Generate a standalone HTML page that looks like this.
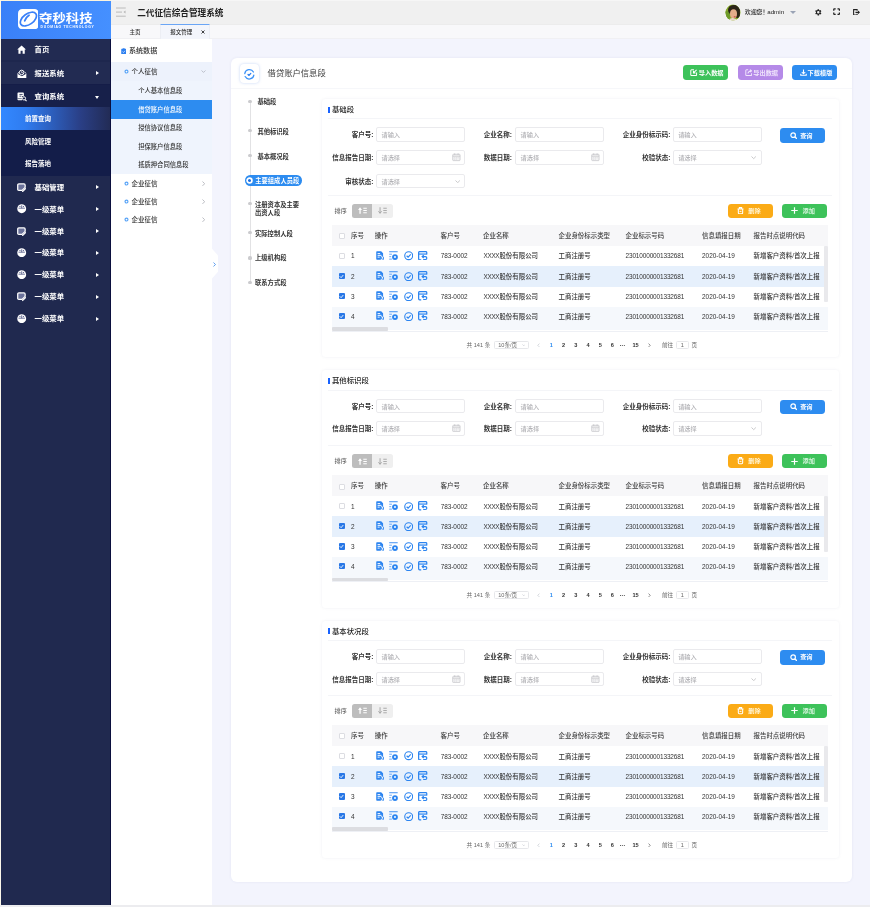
<!DOCTYPE html><html lang="zh-CN"><head><meta charset="utf-8"><title>二代征信综合管理系统</title><style>
*{box-sizing:border-box;margin:0;padding:0}
html,body{width:870px;height:907px;overflow:hidden}
body{position:relative;background:#f3f4fd;font-family:"Liberation Sans","Noto Sans CJK SC",sans-serif;color:#333;font-size:6.3px;line-height:1}
#root{position:absolute;left:0;top:0;width:870px;height:907px;will-change:transform;opacity:0.999}
.abs{position:absolute}
.t{position:absolute;white-space:nowrap;line-height:10px;height:10px}
#side{position:absolute;left:1px;top:0;width:110px;height:907px;background:#20294f}
#logo{position:absolute;left:0;top:0;width:110px;height:38.5px;background:linear-gradient(90deg,#3a80f8,#4590ff)}
.mi{position:absolute;left:0;width:110px;color:#fff;font-weight:700;font-size:7.4px}
.mi .t{left:33.5px}
.mi .ar{position:absolute;left:94.6px;width:0;height:0;border-left:3.6px solid #fff;border-top:2.5px solid transparent;border-bottom:2.5px solid transparent}
.mi .ad{position:absolute;left:93.6px;width:0;height:0;border-top:3.4px solid #fff;border-left:2.6px solid transparent;border-right:2.6px solid transparent}
.smi{position:absolute;left:0;width:110px;color:#fff;font-weight:700;font-size:6.5px}
.smi .t{left:24px}
#top{position:absolute;left:111px;top:0;width:759px;height:24.5px;background:#f0f0f0;border-bottom:1px solid #ececec}
#tabs{position:absolute;left:111px;top:24.5px;width:759px;height:14.8px;background:#f8f8fa;border-bottom:1px solid #f0f0f3}
#tree{position:absolute;left:111px;top:39.3px;width:101px;height:867.7px;background:#fff}
#treein{position:absolute;left:0;top:-0.7px;width:101px;height:0}
#tree .t{font-weight:500}
#card{position:absolute;left:230.7px;top:57.5px;width:621.6px;height:824.6px;background:#fff;border-radius:6px;box-shadow:0 0 3px rgba(120,130,180,.12)}
.sec{position:absolute;left:321.8px;width:517.6px;background:#fff;border-radius:3.5px;box-shadow:0 0 3px rgba(100,110,150,.1)}
.hl{position:absolute;height:1px;background:#f4f5f8}
.lbl{position:absolute;text-align:right;font-weight:700;font-size:6.5px;color:#333;line-height:15.4px;height:15.4px;white-space:nowrap}
.inp{position:absolute;height:14.5px;width:88.5px;border:1px solid #eaeaed;border-radius:2px;background:#fff;font-size:6.2px;font-weight:500;color:#b2b2b6;line-height:14.2px;padding-left:4.2px;white-space:nowrap}
.btn{position:absolute;height:14.5px;border-radius:3.4px;color:#fff;font-size:6.2px;font-weight:700;line-height:14.5px;white-space:nowrap}
.th{position:absolute;font-size:6.45px;color:#404040;font-weight:500;line-height:10px;white-space:nowrap}
.td{position:absolute;font-size:6.45px;color:#333;font-weight:500;line-height:10px;white-space:nowrap}
.cb{position:absolute;width:6px;height:6px;border:0.8px solid #dcdde2;border-radius:1px;background:#fff}
.cbk{position:absolute;width:6.4px;height:6.4px;border-radius:1px;background:#2877e6}
.pg{position:absolute;font-size:5.6px;color:#666;line-height:10px;white-space:nowrap}
</style></head><body><div id="root">
<div id="side"><div class="abs" style="left:0;top:38.5px;width:110px;height:46px;background:#222b52"></div><div class="abs" style="left:0;top:84.3px;width:110px;height:23.1px;background:#17204a"></div><div class="abs" style="left:0;top:107.4px;width:110px;height:68.6px;background:#131d49"></div><div class="abs" style="left:0;top:107.4px;width:110px;height:22.8px;background:linear-gradient(90deg,#3388ff 0%,#2f7cf0 22%,#2a3f86 72%,#222b54 100%)"></div><div class="abs" style="left:109px;top:38.5px;width:1px;height:868.5px;background:#0b0f3e"></div><div id="logo"></div><div class="abs" style="left:0;top:60.4px;width:110px;height:1.2px;background:rgba(10,16,60,.16)"></div><div class="abs" style="left:0;top:83.6px;width:110px;height:1.2px;background:rgba(10,16,60,.16)"></div><svg class="abs" style="left:16.5px;top:8.9px" width="20.8" height="20.2" viewBox="0 0 41.600 40.400"><defs><clipPath id="lgc"><rect x="0" y="0" width="41.600" height="40.400" rx="8.500"/></clipPath></defs><rect x="0" y="0" width="41.600" height="40.400" rx="8.500" fill="#fff"/><g clip-path="url(#lgc)"><ellipse cx="20.800" cy="20.200" rx="18.400" ry="10.600" fill="none" stroke="#3a80f8" stroke-width="3.400" transform="rotate(-36 20.800 20.200)"/><path d="M13.500 23.500C15 19 17.500 15.500 22 12.500" stroke="#3a80f8" stroke-width="3.800" stroke-linecap="round" fill="none"/></g></svg><div class="t" style="left:38.400px;top:10.5px;font-size:12.1px;line-height:16px;height:16px;font-weight:700;color:#fff;letter-spacing:0.1px;transform-origin:0 50%;transform:scaleX(1.1)">夺秒科技</div><div class="t" style="left:39.600px;top:25.1px;font-size:3.4px;line-height:5px;height:5px;font-weight:700;color:#fff;letter-spacing:0.7px">DUOMIAO TECHNOLOGY</div><div class="mi" style="top:50.1px;height:0"><svg class="abs" style="left:16.2px;top:-5.2px" width="9.2" height="9.2" viewBox="0 0 18 18"><path d="M9 .8 L17.600 9 H15.200 V17 H11 V11.500 H7 V17 H2.800 V9 H.4 Z" fill="#fff"/></svg><div class="t" style="top:-4.7px">首页</div></div><div class="mi" style="top:73.7px;height:0"><svg class="abs" style="left:16px;top:-5.2px" width="9.8" height="9.800" viewBox="0 0 20 20"><path d="M1 9.500L10 15l9-5.500V19H1Z" fill="#fff"/><path d="M1 9.500l3.500-3M19 9.500L15.500 6" stroke="#fff" stroke-width="1.800"/><circle cx="9.500" cy="7" r="4.600" fill="none" stroke="#fff" stroke-width="2"/><path d="M9.500 4.500V7.500H12" stroke="#fff" stroke-width="1.500" fill="none"/></svg><div class="t" style="top:-4.7px">报送系统</div><div class="ar" style="top:-2.3px"></div></div><div class="mi" style="top:96.9px;height:0"><svg class="abs" style="left:16.2px;top:-4.6px" width="9.800" height="9.800" viewBox="0 0 20 20"><path d="M2.500 1h10q1.500 0 1.500 1.500V8h-3.500v9H2.500Q1 17 1 15.500v-13Q1 1 2.500 1z" fill="#fff"/><path d="M5 5h6.500M5 8.500h4" stroke="#17204a" stroke-width="1.600"/><path d="M1 13.500h9" stroke="#17204a" stroke-width="1.200"/><circle cx="14.200" cy="13" r="3.300" fill="#17204a" stroke="#fff" stroke-width="2"/><path d="M16.500 15.500l3 3.200" stroke="#fff" stroke-width="2.200"/></svg><div class="t" style="top:-4.7px">查询系统</div><div class="ad" style="top:-1px"></div></div><div class="smi" style="top:119.0px;height:0"><div class="t" style="top:-4.7px">前置查询</div></div><div class="smi" style="top:141.5px;height:0"><div class="t" style="top:-4.7px">风险管理</div></div><div class="smi" style="top:163.7px;height:0"><div class="t" style="top:-4.7px">报告落地</div></div><div class="mi" style="top:187.4px;height:0"><svg class="abs" style="left:15.8px;top:-4.6px" width="9.600" height="9.600" viewBox="0 0 20 20"><path d="M4 2h10.500q2.500 0 2.500 2.500V9l-6.500 6.500H4Q1.500 15.500 1.500 13V4.500Q1.500 2 4 2z" fill="#6b729a" stroke="#fff" stroke-width="2.600"/><path d="M11 18.500l7.500-7.500" stroke="#fff" stroke-width="2.400"/></svg><div class="t" style="top:-4.7px">基础管理</div><div class="ar" style="top:-2.3px"></div></div><div class="mi" style="top:209.4px;height:0"><svg class="abs" style="left:16.2px;top:-5px" width="9.4" height="9.400" viewBox="0 0 19 19"><circle cx="9.500" cy="9.500" r="9" fill="#fff"/><path d="M3 8.500h13M9.500 2.500V8.500" stroke="#4a5282" stroke-width="1.600"/><circle cx="6" cy="5.200" r="1.300" fill="#4a5282"/><circle cx="13" cy="5.200" r="1.300" fill="#4a5282"/></svg><div class="t" style="top:-4.7px">一级菜单</div><div class="ar" style="top:-2.3px"></div></div><div class="mi" style="top:231.3px;height:0"><svg class="abs" style="left:15.8px;top:-4.6px" width="9.600" height="9.600" viewBox="0 0 20 20"><path d="M4 2h10.500q2.500 0 2.500 2.500V9l-6.500 6.500H4Q1.500 15.500 1.500 13V4.500Q1.500 2 4 2z" fill="#6b729a" stroke="#fff" stroke-width="2.600"/><path d="M11 18.500l7.500-7.500" stroke="#fff" stroke-width="2.400"/></svg><div class="t" style="top:-4.7px">一级菜单</div><div class="ar" style="top:-2.3px"></div></div><div class="mi" style="top:252.8px;height:0"><svg class="abs" style="left:16.2px;top:-5px" width="9.4" height="9.400" viewBox="0 0 19 19"><circle cx="9.500" cy="9.500" r="9" fill="#fff"/><path d="M3 8.500h13M9.500 2.500V8.500" stroke="#4a5282" stroke-width="1.600"/><circle cx="6" cy="5.200" r="1.300" fill="#4a5282"/><circle cx="13" cy="5.200" r="1.300" fill="#4a5282"/></svg><div class="t" style="top:-4.7px">一级菜单</div><div class="ar" style="top:-2.3px"></div></div><div class="mi" style="top:274.8px;height:0"><svg class="abs" style="left:16.2px;top:-5px" width="9.4" height="9.400" viewBox="0 0 19 19"><circle cx="9.500" cy="9.500" r="9" fill="#fff"/><path d="M3 8.500h13M9.500 2.500V8.500" stroke="#4a5282" stroke-width="1.600"/><circle cx="6" cy="5.200" r="1.300" fill="#4a5282"/><circle cx="13" cy="5.200" r="1.300" fill="#4a5282"/></svg><div class="t" style="top:-4.7px">一级菜单</div><div class="ar" style="top:-2.3px"></div></div><div class="mi" style="top:296.8px;height:0"><svg class="abs" style="left:15.8px;top:-4.6px" width="9.600" height="9.600" viewBox="0 0 20 20"><path d="M4 2h10.500q2.500 0 2.500 2.500V9l-6.500 6.500H4Q1.500 15.500 1.500 13V4.500Q1.500 2 4 2z" fill="#6b729a" stroke="#fff" stroke-width="2.600"/><path d="M11 18.500l7.500-7.500" stroke="#fff" stroke-width="2.400"/></svg><div class="t" style="top:-4.7px">一级菜单</div><div class="ar" style="top:-2.3px"></div></div><div class="mi" style="top:318.8px;height:0"><svg class="abs" style="left:16.2px;top:-5px" width="9.4" height="9.400" viewBox="0 0 19 19"><circle cx="9.500" cy="9.500" r="9" fill="#fff"/><path d="M3 8.500h13M9.500 2.500V8.500" stroke="#4a5282" stroke-width="1.600"/><circle cx="6" cy="5.200" r="1.300" fill="#4a5282"/><circle cx="13" cy="5.200" r="1.300" fill="#4a5282"/></svg><div class="t" style="top:-4.7px">一级菜单</div><div class="ar" style="top:-2.3px"></div></div></div>
<div id="top"><svg class="abs" style="left:4.8px;top:6.6px" width="10" height="10" viewBox="0 0 20 20"><path d="M0 2H19.500M0 10.200H12M0 18.400H19.500" stroke="#b4b4b4" stroke-width="1.800" fill="none"/><path d="M19 7.200v6l-4-3z" fill="#b4b4b4"/></svg><div class="t" style="left:26.2px;top:6.6px;font-size:8.65px;line-height:12px;height:12px;color:#222;font-weight:700">二代征信综合管理系统</div><svg class="abs" style="left:614px;top:3.6px" width="16" height="17.2" viewBox="0 0 32 34"><defs><clipPath id="avc"><ellipse cx="16" cy="17" rx="15" ry="16"/></clipPath></defs><ellipse cx="16" cy="17" rx="16" ry="17" fill="#fafafa"/><g clip-path="url(#avc)"><rect width="32" height="34" fill="#86a82c"/><rect x="0" y="14" width="10" height="20" fill="#6e9a28"/><ellipse cx="18" cy="12" rx="12" ry="10" fill="#2c2618"/><ellipse cx="25" cy="19" rx="5" ry="9" fill="#2c2618"/><ellipse cx="17" cy="19.500" rx="7" ry="9" fill="#e4ad8a"/><path d="M8 14q5-8 17-3l-2-6H9z" fill="#2c2618"/><ellipse cx="19.500" cy="25.500" rx="2.200" ry="1.300" fill="#c8403a"/><path d="M6 34q3-7 10-6t10 6z" fill="#e8d8c8"/></g></svg><div class="t" style="left:633.8px;top:7.4px;font-size:6px;color:#222;font-weight:500;letter-spacing:-0.1px">欢迎您！<span style="font-size:6.2px;letter-spacing:0;margin-left:-1.2px">admin</span></div><div class="abs" style="left:679px;top:11px;width:0;height:0;border-top:3px solid #9aa3b5;border-left:3px solid transparent;border-right:3px solid transparent"></div><svg class="abs" style="left:702.6px;top:7.8px" width="8.6" height="8.6" viewBox="0 0 24 24"><path fill="#222" d="M19.4 13a7.5 7.5 0 000-2l2.1-1.6-2-3.5-2.5 1a7.600 7.600 0 00-1.700-1L15 3.200h-4l-.4 2.700a7.600 7.600 0 00-1.700 1l-2.500-1-2 3.500L6.600 11a7.500 7.500 0 000 2l-2.100 1.600 2 3.500 2.500-1a7.600 7.600 0 001.700 1l.4 2.700h4l.4-2.700a7.600 7.600 0 001.700-1l2.500 1 2-3.500zM13 15.500a3.500 3.500 0 110-7 3.500 3.500 0 010 7z" transform="translate(-1 0)"/></svg><svg class="abs" style="left:722px;top:8.4px" width="7.200" height="7.200" viewBox="0 0 16 16"><path fill="none" stroke="#222" stroke-width="2.800" stroke-linejoin="round" d="M1.700 6V3q0-1.300 1.300-1.300H6M10 1.700h3q1.300 0 1.300 1.300V6M14.300 10v3q0 1.300-1.300 1.300H10M6 14.300H3q-1.300 0-1.300-1.300V10"/></svg><svg class="abs" style="left:741.6px;top:8.800px" width="7" height="6.600" viewBox="0 0 17 16"><path fill="none" stroke="#222" stroke-width="2.600" d="M10 4.500V1.500H1.500v13H10V11.500"/><path fill="#222" d="M6 6.500h6V3.500l5 4.500-5 4.500V9.500H6z"/></svg></div>
<div id="tabs"><div class="abs" style="left:48.8px;top:-0.6px;width:50px;height:15.4px;background:#f3f5fb;border-top:1px solid #6aa5f5;border-left:1px solid #eceef4;border-right:1px solid #eceef4"></div><div class="t" style="left:18.6px;top:2.2px;font-size:5.5px;color:#333;font-weight:500">主页</div><div class="t" style="left:59.2px;top:2.2px;font-size:5.5px;color:#333;font-weight:500">报文管理</div><svg class="abs" style="left:90.2px;top:5.4px" width="4" height="4" viewBox="0 0 8 8"><path d="M1 1l6 6M7 1L1 7" stroke="#222" stroke-width="1.700"/></svg></div>
<div id="tree"><div id="treein"><div class="abs" style="left:0;top:22.9px;width:101px;height:112.8px;background:#eff4fd"></div><div class="abs" style="left:0;top:22.9px;width:101px;height:19.2px;background:#edf2fc"></div><div class="abs" style="left:0;top:61.1px;width:101px;height:18.8px;background:#2d8cf0"></div><svg class="abs" style="left:10px;top:9.1px" width="5.4" height="6.6" viewBox="0 0 11 13"><path d="M1.500 1.500h2V.5h4v1h2q1 0 1 1v9.500q0 1-1 1h-8q-1 0-1-1V2.500q0-1 1-1z" fill="#2d7ff0"/><path d="M3 7l2 2 3.200-3.600" stroke="#fff" stroke-width="1.300" fill="none"/></svg><div class="t" style="left:17.9px;top:7.8px;font-size:7.1px;color:#333;font-weight:500">系统数据</div><svg class="abs" style="left:12.5px;top:30.4px" width="5" height="5" viewBox="0 0 10 10"><circle cx="5" cy="5" r="2.900" fill="#fff" stroke="#55a2f7" stroke-width="2.300"/></svg><svg class="abs" style="left:90.0px;top:31.5px" width="5" height="3.4" viewBox="0 0 10 7"><path d="M1 1l4 4 4-4" stroke="#b4b8c2" stroke-width="1.800" fill="none"/></svg><div class="t" style="left:20.4px;top:28.2px;font-size:6.5px;color:#333">个人征信</div><div class="t" style="left:27.2px;top:47.6px;font-size:6.3px;color:#333">个人基本信息段</div><div class="t" style="left:27.2px;top:66.1px;font-size:6.3px;color:#fff">借贷账户信息段</div><div class="t" style="left:27.2px;top:84.6px;font-size:6.3px;color:#333">授信协议信息段</div><div class="t" style="left:27.2px;top:103.1px;font-size:6.3px;color:#333">担保账户信息段</div><div class="t" style="left:27.2px;top:121.6px;font-size:6.3px;color:#333">抵质押合同信息段</div><svg class="abs" style="left:12.5px;top:142.4px" width="5" height="5" viewBox="0 0 10 10"><circle cx="5" cy="5" r="2.900" fill="#fff" stroke="#55a2f7" stroke-width="2.300"/></svg><svg class="abs" style="left:90.8px;top:142.2px" width="3.4" height="5.4" viewBox="0 0 7 11"><path d="M1 1l4.500 4.500L1 10" stroke="#b4b6bc" stroke-width="1.900" fill="none"/></svg><div class="t" style="left:20.4px;top:140.2px;font-size:6.5px;color:#333">企业征信</div><svg class="abs" style="left:12.5px;top:160.7px" width="5" height="5" viewBox="0 0 10 10"><circle cx="5" cy="5" r="2.900" fill="#fff" stroke="#55a2f7" stroke-width="2.300"/></svg><svg class="abs" style="left:90.8px;top:160.5px" width="3.4" height="5.4" viewBox="0 0 7 11"><path d="M1 1l4.500 4.500L1 10" stroke="#b4b6bc" stroke-width="1.900" fill="none"/></svg><div class="t" style="left:20.4px;top:158.5px;font-size:6.5px;color:#333">企业征信</div><svg class="abs" style="left:12.5px;top:178.4px" width="5" height="5" viewBox="0 0 10 10"><circle cx="5" cy="5" r="2.900" fill="#fff" stroke="#55a2f7" stroke-width="2.300"/></svg><svg class="abs" style="left:90.8px;top:178.2px" width="3.4" height="5.4" viewBox="0 0 7 11"><path d="M1 1l4.500 4.500L1 10" stroke="#b4b6bc" stroke-width="1.900" fill="none"/></svg><div class="t" style="left:20.4px;top:176.2px;font-size:6.5px;color:#333">企业征信</div></div></div>
<div class="abs" style="left:211.8px;top:248.4px;width:6.2px;height:30.4px;background:#fff;clip-path:polygon(0 0,100% 23%,100% 77%,0 100%)"></div><svg class="abs" style="left:212.8px;top:262px" width="3.4" height="5" viewBox="0 0 7 10"><path d="M1 1l4.200 4L1 9" stroke="#5a9cf0" stroke-width="2" fill="none"/></svg><div id="card"></div><div class="abs" style="left:239.8px;top:64.2px;width:19px;height:19.2px;border-radius:4px;background:#fff;box-shadow:0 0 3px rgba(80,130,230,.34)"></div><svg class="abs" style="left:243.1px;top:67.6px" width="12.6" height="12.6" viewBox="0 0 20 20"><path d="M2.800 8.800A7.400 7.400 0 0116.600 6.400M17.200 11.200A7.400 7.400 0 013.400 13.600" stroke="#3d93f7" stroke-width="2" fill="none" stroke-linecap="round"/><path d="M8 10.300l1.600 1.500 2.800-3.200" stroke="#2d7ff0" stroke-width="2" fill="none" stroke-linecap="round" stroke-linejoin="round"/></svg><div class="t" style="left:267.6px;top:67.300px;font-size:8.3px;line-height:12px;height:12px;color:#3a3a3a">借贷账户信息段</div><div class="hl" style="left:230.7px;top:88.2px;width:621.6px;background:#f6f7fa"></div><div class="btn" style="left:683.0px;top:65.4px;width:45.4px;background:#3dc25a"><svg class="abs" style="left:7.2px;top:3.4px" width="7.4" height="7.4" viewBox="0 0 14 14"><path d="M7.500 1.500H3q-1.500 0-1.500 1.500v8q0 1.500 1.500 1.500h8q1.500 0 1.500-1.500V6.500" stroke="#fff" stroke-width="1.900" fill="none"/><path d="M12.500 1.500L6.500 7.500M6.500 3.500v4h4" stroke="#fff" stroke-width="1.900" fill="none"/></svg><div class="t" style="left:15.8px;top:2.6px;color:#fff">导入数据</div></div><div class="btn" style="left:737.5px;top:65.4px;width:45.4px;background:#b58ae8"><svg class="abs" style="left:7.6px;top:3.4px" width="7.4" height="7.4" viewBox="0 0 14 14"><path d="M6 1.500H3q-1.500 0-1.500 1.500v8q0 1.500 1.500 1.500h8q1.500 0 1.500-1.500V8" stroke="#f0e4fc" stroke-width="1.900" fill="none"/><path d="M5.500 8.500q1-4.500 6.500-5M9.500 1l3 2.500-3 2.500" stroke="#f0e4fc" stroke-width="1.900" fill="none"/></svg><div class="t" style="left:15.8px;top:2.6px;color:#f0e4fc">导出数据</div></div><div class="btn" style="left:791.8px;top:65.4px;width:45.6px;background:#2d8cf0"><svg class="abs" style="left:7.8px;top:3.6px" width="7" height="7" viewBox="0 0 14 14"><path d="M7 1v8M3.500 6L7 9.500 10.500 6" stroke="#fff" stroke-width="2.100" fill="none"/><path d="M1.500 9.500V12.500h11V9.500" stroke="#fff" stroke-width="2.100" fill="none"/></svg><div class="t" style="left:15.800px;top:2.6px">下载模版</div></div><div class="abs" style="left:249.5px;top:102px;width:1px;height:180px;background:#e2e2e4"></div><div class="abs" style="left:248.4px;top:100.0px;width:3.2px;height:3.2px;border-radius:50%;background:#cbcbce"></div><div class="t" style="left:257.4px;top:97.4px;font-size:6.3px;font-weight:700;color:#333">基础段</div><div class="abs" style="left:248.4px;top:129.0px;width:3.2px;height:3.2px;border-radius:50%;background:#cbcbce"></div><div class="t" style="left:257.4px;top:126.6px;font-size:6.3px;font-weight:700;color:#333">其他标识段</div><div class="abs" style="left:248.4px;top:153.8px;width:3.2px;height:3.2px;border-radius:50%;background:#cbcbce"></div><div class="t" style="left:257.4px;top:151.9px;font-size:6.3px;font-weight:700;color:#333">基本概况段</div><div class="abs" style="left:248.4px;top:231.2px;width:3.2px;height:3.2px;border-radius:50%;background:#cbcbce"></div><div class="t" style="left:255.0px;top:228.9px;font-size:6.3px;font-weight:700;color:#333">实际控制人段</div><div class="abs" style="left:248.4px;top:256.4px;width:3.2px;height:3.2px;border-radius:50%;background:#cbcbce"></div><div class="t" style="left:255.0px;top:252.7px;font-size:6.3px;font-weight:700;color:#333">上级机构段</div><div class="abs" style="left:248.4px;top:280.5px;width:3.2px;height:3.2px;border-radius:50%;background:#cbcbce"></div><div class="t" style="left:255.0px;top:277.6px;font-size:6.3px;font-weight:700;color:#333">联系方式段</div><div class="abs" style="left:248.4px;top:202.1px;width:3.2px;height:3.2px;border-radius:50%;background:#cbcbce"></div><div class="t" style="left:255px;top:200.2px;font-size:6.3px;font-weight:700;color:#333">注册资本及主要</div><div class="t" style="left:255px;top:207.5px;font-size:6.3px;font-weight:700;color:#333">出资人段</div><div class="abs" style="left:245px;top:175.2px;width:57.2px;height:10.4px;border-radius:5.2px;background:#2d8cf0"></div><svg class="abs" style="left:246.4px;top:176.9px" width="7" height="7" viewBox="0 0 14 14"><circle cx="7" cy="7" r="4.800" fill="#1d6fe0" stroke="#fff" stroke-width="3.400"/></svg><div class="t" style="left:255.2px;top:175.6px;font-size:6.3px;font-weight:700;color:#fff">主要组成人员段</div><div class="sec" style="top:99.3px;height:257.8px"></div><div class="abs" style="left:328px;top:106.9px;width:1.5px;height:6.2px;background:#1862ff"></div><div class="t" style="left:331.9px;top:105.2px;font-size:7.4px;font-weight:500;color:#222">基础段</div><div class="hl" style="left:328px;top:118.1px;width:503.5px"></div><div class="lbl" style="left:303.5px;top:127.3px;width:70px">客户号:</div><div class="inp" style="left:376.3px;top:127.3px">请输入</div><div class="lbl" style="left:441.9px;top:127.3px;width:70px">企业名称:</div><div class="inp" style="left:515.4px;top:127.3px">请输入</div><div class="lbl" style="left:600.5px;top:127.3px;width:70px">企业身份标示码:</div><div class="inp" style="left:673.0px;top:127.3px">请输入</div><div class="btn" style="left:780px;top:128.2px;width:45px;background:#2d8cf0"><svg class="abs" style="left:9.800px;top:3.600px" width="7.4" height="7.4" viewBox="0 0 13 13"><circle cx="5.500" cy="5.500" r="4" fill="none" stroke="#fff" stroke-width="2.100"/><path d="M8.500 8.500l3.500 3.500" stroke="#fff" stroke-width="2.300"/></svg><div class="t" style="left:20.2px;top:2.4px">查询</div></div><div class="lbl" style="left:303.5px;top:150.1px;width:70px">信息报告日期:</div><div class="inp" style="left:376.3px;top:150.1px">请选择<svg class="abs" style="left:75px;top:2.1px" width="8.8" height="8.4" viewBox="0 0 18 17"><rect x="1.500" y="2.500" width="15" height="13" rx="1.500" fill="#f2f2f3" stroke="#c4c4c8" stroke-width="1.500"/><path d="M1.500 6.500h15" stroke="#c4c4c8" stroke-width="1.500"/><path d="M5.500 .5v3.500M12.500 .5v3.500" stroke="#c4c4c8" stroke-width="1.600"/><path d="M4.500 9.500h2M8 9.500h2M11.500 9.500h2M4.500 12.500h2M8 12.500h2" stroke="#d2d2d6" stroke-width="1.400"/></svg></div><div class="lbl" style="left:441.9px;top:150.1px;width:70px">数据日期:</div><div class="inp" style="left:515.4px;top:150.1px">请选择<svg class="abs" style="left:75px;top:2.1px" width="8.8" height="8.4" viewBox="0 0 18 17"><rect x="1.500" y="2.500" width="15" height="13" rx="1.500" fill="#f2f2f3" stroke="#c4c4c8" stroke-width="1.500"/><path d="M1.500 6.500h15" stroke="#c4c4c8" stroke-width="1.500"/><path d="M5.500 .5v3.500M12.500 .5v3.500" stroke="#c4c4c8" stroke-width="1.600"/><path d="M4.500 9.500h2M8 9.500h2M11.500 9.500h2M4.500 12.500h2M8 12.500h2" stroke="#d2d2d6" stroke-width="1.400"/></svg></div><div class="lbl" style="left:600.5px;top:150.1px;width:70px">校验状态:</div><div class="inp" style="left:673.0px;top:150.1px">请选择<svg class="abs" style="left:77.4px;top:5.2px" width="5.4" height="3.4" viewBox="0 0 11 7"><path d="M1 1l4.500 4.500L10 1" stroke="#b4b4b8" stroke-width="1.500" fill="none"/></svg></div><div class="lbl" style="left:303.5px;top:173.5px;width:70px">审核状态:</div><div class="inp" style="left:376.3px;top:173.5px">请选择<svg class="abs" style="left:77.4px;top:5.2px" width="5.4" height="3.4" viewBox="0 0 11 7"><path d="M1 1l4.500 4.500L10 1" stroke="#b4b4b8" stroke-width="1.500" fill="none"/></svg></div><div class="hl" style="left:328px;top:194.8px;width:503.5px"></div><div class="t" style="left:334.6px;top:206.2px;font-size:6.1px;color:#666;font-weight:500">排序</div><div class="abs" style="left:352px;top:203.8px;width:20.4px;height:14px;background:#bdbdbd;border-radius:2.500px 0 0 2.500px"></div><div class="abs" style="left:372.4px;top:203.8px;width:21px;height:14px;background:#efefef;border-radius:0 2.500px 2.500px 0"></div><svg class="abs" style="left:357.6px;top:207.3px" width="9.6" height="7" viewBox="0 0 19 14"><path d="M4 13.500V3" stroke="#fff" stroke-width="2.600" fill="none"/><path d="M0 6l4-5.500L8 6z" fill="#fff"/><path d="M10.500 2.500h7M10.500 7h7M10.500 11.500h7" stroke="#fff" stroke-width="2"/></svg><svg class="abs" style="left:378.2px;top:207.3px" width="9.6" height="7" viewBox="0 0 19 14"><path d="M4 .5v12M.8 8.500l3.200 4L7.200 8.500" stroke="#a4a4a4" stroke-width="1.900" fill="none"/><path d="M10.500 2.500h7M10.500 7h7M10.500 11.500h7" stroke="#a4a4a4" stroke-width="1.800"/></svg><div class="btn" style="left:727.8px;top:203.8px;width:45px;height:14px;background:#fbab16"><svg class="abs" style="left:8.800px;top:3.300px" width="7" height="7.400" viewBox="0 0 13 14"><path d="M.8 3.800h11.400M4.300 3V1.200h4.400V3M2.400 4.500v6.500q0 1.800 1.800 1.800h4.600q1.800 0 1.800-1.800V4.500" stroke="#fff" stroke-width="2" fill="none"/><path d="M4.700 8.300h3.600" stroke="#fff" stroke-width="1.800"/></svg><div class="t" style="left:20.5px;top:2px;color:#fff3d0">删除</div></div><div class="btn" style="left:782px;top:203.8px;width:45.2px;height:14px;background:#3dc25a"><svg class="abs" style="left:9px;top:3.500px" width="7" height="7" viewBox="0 0 14 14"><path d="M7 .5v13M.5 7h13" stroke="#fff" stroke-width="2.400"/></svg><div class="t" style="left:20.5px;top:2px;color:#d8f5df">添加</div></div><div class="abs" style="left:332px;top:225.1px;width:495.5px;height:106px;background:#fff;border:0 solid #eef0f4"></div><div class="abs" style="left:332px;top:224.6px;width:495.5px;height:21.1px;background:#f7f7f9"></div><div class="abs" style="left:332px;top:266.0px;width:495.5px;height:20.8px;background:#e6f0fc"></div><div class="abs" style="left:332px;top:306.6px;width:495.5px;height:23px;background:#f5f8fc"></div><div class="hl" style="left:332px;top:330.6px;width:495.5px;background:#eef0f5"></div><div class="cb" style="left:339px;top:233.3px"></div><div class="th" style="left:351.0px;top:230.9px">序号</div><div class="th" style="left:374.8px;top:230.9px">操作</div><div class="th" style="left:440.5px;top:230.9px">客户号</div><div class="th" style="left:483.0px;top:230.9px">企业名称</div><div class="th" style="left:558.5px;top:230.9px">企业身份标示类型</div><div class="th" style="left:625.5px;top:230.9px">企业标示号码</div><div class="th" style="left:702.0px;top:230.9px">信息填报日期</div><div class="th" style="left:753.5px;top:230.9px">报告时点说明代码</div><div class="cb" style="left:339px;top:252.8px"></div><div class="td" style="left:351px;top:251.4px;font-weight:500">1</div><svg class="abs" style="left:375.6px;top:251.0px" width="8.8" height="9.400" viewBox="0 0 18 19"><path d="M2 .5h8.500l4 4V10H10v8H2Q.5 18 .5 16.500V2Q.5 .5 2 .5z" fill="#2b84f0"/><path d="M3.200 5.200h5.300M3.200 8.800h8M3.200 12.400h4.300" stroke="#fff" stroke-width="2"/><circle cx="13.200" cy="14" r="2.600" fill="#fff" stroke="#2b84f0" stroke-width="1.900"/><path d="M15 16l2.400 2.400" stroke="#2b84f0" stroke-width="2"/></svg><svg class="abs" style="left:389.400px;top:251.0px" width="9" height="9.400" viewBox="0 0 18 19"><path d="M.3 1.500h17.200" stroke="#2b84f0" stroke-width="1.800"/><path d="M.3 6.500h5.500M.3 11.500h4M.3 16.500h5.500" stroke="#5a9ff4" stroke-width="1.800"/><circle cx="12" cy="12.300" r="5.900" fill="#2b84f0"/><circle cx="12" cy="12.300" r="2" fill="#fff"/></svg><svg class="abs" style="left:404.100px;top:251.3px" width="9.4" height="9.400" viewBox="0 0 19 19"><circle cx="9.500" cy="9.500" r="8" fill="none" stroke="#2b84f0" stroke-width="2.200"/><path d="M5.300 9.600l3 3 5.400-5.800" stroke="#2b84f0" stroke-width="2.400" fill="none"/></svg><svg class="abs" style="left:418.400px;top:251.0px" width="9.400" height="9.400" viewBox="0 0 19 19"><path d="M17.700 7V3.200q0-2-2-2H3.300q-2 0-2 2v12.600q0 2 2 2H6.500" stroke="#2b84f0" stroke-width="2.500" fill="none"/><path d="M1.300 6.200h16.400" stroke="#2b84f0" stroke-width="2.400"/><path d="M8.700 11.200h6.300q2.800 0 2.800 3t-2.800 3H10.500" stroke="#2b84f0" stroke-width="2.400" fill="none"/><path d="M11.600 8.200L8.400 11.200l3.200 3" stroke="#2b84f0" stroke-width="2.300" fill="none"/></svg><div class="td" style="left:440.7px;top:251.4px"><span style="letter-spacing:-0.05px">783-0002</span></div><div class="td" style="left:483.4px;top:251.4px"><span style="letter-spacing:-0.3px">XXXX</span>股份有限公司</div><div class="td" style="left:558.5px;top:251.4px">工商注册号</div><div class="td" style="left:625.5px;top:251.4px"><span style="letter-spacing:-0.13px">23010000001332681</span></div><div class="td" style="left:702.0px;top:251.4px">2020-04-19</div><div class="td" style="left:753.5px;top:251.4px">新增客户资料/首次上报</div><div class="cbk" style="left:338.8px;top:272.9px"><svg class="abs" style="left:0.7px;top:0.9px" width="5" height="4.600" viewBox="0 0 10 9"><path d="M1.500 4.500l2.700 2.700L8.500 2" stroke="#fff" stroke-width="1.800" fill="none"/></svg></div><div class="td" style="left:351px;top:271.6px;font-weight:500">2</div><svg class="abs" style="left:375.6px;top:271.2px" width="8.8" height="9.400" viewBox="0 0 18 19"><path d="M2 .5h8.500l4 4V10H10v8H2Q.5 18 .5 16.500V2Q.5 .5 2 .5z" fill="#2b84f0"/><path d="M3.200 5.200h5.300M3.200 8.800h8M3.200 12.400h4.300" stroke="#fff" stroke-width="2"/><circle cx="13.200" cy="14" r="2.600" fill="#fff" stroke="#2b84f0" stroke-width="1.900"/><path d="M15 16l2.400 2.400" stroke="#2b84f0" stroke-width="2"/></svg><svg class="abs" style="left:389.400px;top:271.2px" width="9" height="9.400" viewBox="0 0 18 19"><path d="M.3 1.500h17.200" stroke="#2b84f0" stroke-width="1.800"/><path d="M.3 6.500h5.500M.3 11.500h4M.3 16.500h5.500" stroke="#5a9ff4" stroke-width="1.800"/><circle cx="12" cy="12.300" r="5.900" fill="#2b84f0"/><circle cx="12" cy="12.300" r="2" fill="#fff"/></svg><svg class="abs" style="left:404.100px;top:271.5px" width="9.4" height="9.400" viewBox="0 0 19 19"><circle cx="9.500" cy="9.500" r="8" fill="none" stroke="#2b84f0" stroke-width="2.200"/><path d="M5.300 9.600l3 3 5.400-5.800" stroke="#2b84f0" stroke-width="2.400" fill="none"/></svg><svg class="abs" style="left:418.400px;top:271.2px" width="9.400" height="9.400" viewBox="0 0 19 19"><path d="M17.700 7V3.200q0-2-2-2H3.300q-2 0-2 2v12.600q0 2 2 2H6.500" stroke="#2b84f0" stroke-width="2.500" fill="none"/><path d="M1.300 6.200h16.400" stroke="#2b84f0" stroke-width="2.400"/><path d="M8.700 11.200h6.300q2.800 0 2.800 3t-2.800 3H10.500" stroke="#2b84f0" stroke-width="2.400" fill="none"/><path d="M11.600 8.200L8.400 11.200l3.200 3" stroke="#2b84f0" stroke-width="2.300" fill="none"/></svg><div class="td" style="left:440.7px;top:271.6px"><span style="letter-spacing:-0.05px">783-0002</span></div><div class="td" style="left:483.4px;top:271.6px"><span style="letter-spacing:-0.3px">XXXX</span>股份有限公司</div><div class="td" style="left:558.5px;top:271.6px">工商注册号</div><div class="td" style="left:625.5px;top:271.6px"><span style="letter-spacing:-0.13px">23010000001332681</span></div><div class="td" style="left:702.0px;top:271.6px">2020-04-19</div><div class="td" style="left:753.5px;top:271.6px">新增客户资料/首次上报</div><div class="cbk" style="left:338.8px;top:293.1px"><svg class="abs" style="left:0.7px;top:0.9px" width="5" height="4.600" viewBox="0 0 10 9"><path d="M1.500 4.500l2.700 2.700L8.500 2" stroke="#fff" stroke-width="1.800" fill="none"/></svg></div><div class="td" style="left:351px;top:291.8px;font-weight:500">3</div><svg class="abs" style="left:375.6px;top:291.4px" width="8.8" height="9.400" viewBox="0 0 18 19"><path d="M2 .5h8.500l4 4V10H10v8H2Q.5 18 .5 16.500V2Q.5 .5 2 .5z" fill="#2b84f0"/><path d="M3.200 5.200h5.300M3.200 8.800h8M3.200 12.400h4.300" stroke="#fff" stroke-width="2"/><circle cx="13.200" cy="14" r="2.600" fill="#fff" stroke="#2b84f0" stroke-width="1.900"/><path d="M15 16l2.400 2.400" stroke="#2b84f0" stroke-width="2"/></svg><svg class="abs" style="left:389.400px;top:291.4px" width="9" height="9.400" viewBox="0 0 18 19"><path d="M.3 1.500h17.200" stroke="#2b84f0" stroke-width="1.800"/><path d="M.3 6.500h5.500M.3 11.500h4M.3 16.500h5.500" stroke="#5a9ff4" stroke-width="1.800"/><circle cx="12" cy="12.300" r="5.900" fill="#2b84f0"/><circle cx="12" cy="12.300" r="2" fill="#fff"/></svg><svg class="abs" style="left:404.100px;top:291.7px" width="9.4" height="9.400" viewBox="0 0 19 19"><circle cx="9.500" cy="9.500" r="8" fill="none" stroke="#2b84f0" stroke-width="2.200"/><path d="M5.300 9.600l3 3 5.400-5.800" stroke="#2b84f0" stroke-width="2.400" fill="none"/></svg><svg class="abs" style="left:418.400px;top:291.4px" width="9.400" height="9.400" viewBox="0 0 19 19"><path d="M17.700 7V3.200q0-2-2-2H3.300q-2 0-2 2v12.600q0 2 2 2H6.500" stroke="#2b84f0" stroke-width="2.500" fill="none"/><path d="M1.300 6.200h16.400" stroke="#2b84f0" stroke-width="2.400"/><path d="M8.700 11.200h6.300q2.800 0 2.800 3t-2.800 3H10.500" stroke="#2b84f0" stroke-width="2.400" fill="none"/><path d="M11.600 8.200L8.400 11.200l3.200 3" stroke="#2b84f0" stroke-width="2.300" fill="none"/></svg><div class="td" style="left:440.7px;top:291.8px"><span style="letter-spacing:-0.05px">783-0002</span></div><div class="td" style="left:483.4px;top:291.8px"><span style="letter-spacing:-0.3px">XXXX</span>股份有限公司</div><div class="td" style="left:558.5px;top:291.8px">工商注册号</div><div class="td" style="left:625.5px;top:291.8px"><span style="letter-spacing:-0.13px">23010000001332681</span></div><div class="td" style="left:702.0px;top:291.8px">2020-04-19</div><div class="td" style="left:753.5px;top:291.8px">新增客户资料/首次上报</div><div class="cbk" style="left:338.8px;top:312.9px"><svg class="abs" style="left:0.7px;top:0.9px" width="5" height="4.600" viewBox="0 0 10 9"><path d="M1.500 4.500l2.700 2.700L8.500 2" stroke="#fff" stroke-width="1.800" fill="none"/></svg></div><div class="td" style="left:351px;top:311.6px;font-weight:500">4</div><svg class="abs" style="left:375.6px;top:311.2px" width="8.8" height="9.400" viewBox="0 0 18 19"><path d="M2 .5h8.500l4 4V10H10v8H2Q.5 18 .5 16.500V2Q.5 .5 2 .5z" fill="#2b84f0"/><path d="M3.200 5.200h5.300M3.200 8.800h8M3.200 12.400h4.300" stroke="#fff" stroke-width="2"/><circle cx="13.200" cy="14" r="2.600" fill="#fff" stroke="#2b84f0" stroke-width="1.900"/><path d="M15 16l2.400 2.400" stroke="#2b84f0" stroke-width="2"/></svg><svg class="abs" style="left:389.400px;top:311.2px" width="9" height="9.400" viewBox="0 0 18 19"><path d="M.3 1.500h17.200" stroke="#2b84f0" stroke-width="1.800"/><path d="M.3 6.500h5.500M.3 11.500h4M.3 16.500h5.500" stroke="#5a9ff4" stroke-width="1.800"/><circle cx="12" cy="12.300" r="5.900" fill="#2b84f0"/><circle cx="12" cy="12.300" r="2" fill="#fff"/></svg><svg class="abs" style="left:404.100px;top:311.5px" width="9.4" height="9.400" viewBox="0 0 19 19"><circle cx="9.500" cy="9.500" r="8" fill="none" stroke="#2b84f0" stroke-width="2.200"/><path d="M5.300 9.600l3 3 5.400-5.800" stroke="#2b84f0" stroke-width="2.400" fill="none"/></svg><svg class="abs" style="left:418.400px;top:311.2px" width="9.400" height="9.400" viewBox="0 0 19 19"><path d="M17.700 7V3.200q0-2-2-2H3.300q-2 0-2 2v12.600q0 2 2 2H6.500" stroke="#2b84f0" stroke-width="2.500" fill="none"/><path d="M1.300 6.200h16.400" stroke="#2b84f0" stroke-width="2.400"/><path d="M8.700 11.200h6.300q2.800 0 2.800 3t-2.800 3H10.500" stroke="#2b84f0" stroke-width="2.400" fill="none"/><path d="M11.600 8.200L8.400 11.200l3.200 3" stroke="#2b84f0" stroke-width="2.300" fill="none"/></svg><div class="td" style="left:440.7px;top:311.6px"><span style="letter-spacing:-0.05px">783-0002</span></div><div class="td" style="left:483.4px;top:311.6px"><span style="letter-spacing:-0.3px">XXXX</span>股份有限公司</div><div class="td" style="left:558.5px;top:311.6px">工商注册号</div><div class="td" style="left:625.5px;top:311.6px"><span style="letter-spacing:-0.13px">23010000001332681</span></div><div class="td" style="left:702.0px;top:311.6px">2020-04-19</div><div class="td" style="left:753.5px;top:311.6px">新增客户资料/首次上报</div><div class="abs" style="left:824.1px;top:245.9px;width:3.6px;height:56px;background:#e9e9ec;border-radius:1px"></div><div class="abs" style="left:332px;top:327.3px;width:55.5px;height:3.4px;background:#dcdde1;border-radius:1px"></div><div class="pg" style="left:466.6px;top:339.7px">共 141 条</div><div class="abs" style="left:494px;top:340.5px;width:34.5px;height:8.600px;border:0.8px solid #e6e7ea;border-radius:1.500px;background:#fff"></div><div class="pg" style="left:498.2px;top:339.7px">10条/页</div><svg class="abs" style="left:521.5px;top:343.7px" width="3.6" height="2.400" viewBox="0 0 9 6"><path d="M1 1l3.500 3.500L8 1" stroke="#b8bcc4" stroke-width="1.300" fill="none"/></svg><svg class="abs" style="left:537.2px;top:342.5px" width="3" height="4.600" viewBox="0 0 6 9"><path d="M5 1L1.500 4.500 5 8" stroke="#c0c4cc" stroke-width="1.300" fill="none"/></svg><div class="pg" style="left:551.2px;top:339.7px;width:8px;text-align:center;font-weight:700;color:#2d8cf0;margin-left:-4px">1</div><div class="pg" style="left:563.6px;top:339.7px;width:8px;text-align:center;font-weight:700;color:#333;margin-left:-4px">2</div><div class="pg" style="left:575.8px;top:339.7px;width:8px;text-align:center;font-weight:700;color:#333;margin-left:-4px">3</div><div class="pg" style="left:588.0px;top:339.7px;width:8px;text-align:center;font-weight:700;color:#333;margin-left:-4px">4</div><div class="pg" style="left:600.2px;top:339.7px;width:8px;text-align:center;font-weight:700;color:#333;margin-left:-4px">5</div><div class="pg" style="left:612.4px;top:339.7px;width:8px;text-align:center;font-weight:700;color:#333;margin-left:-4px">6</div><div class="pg" style="left:622.5px;top:339.7px;width:8px;text-align:center;font-weight:700;color:#333;margin-left:-4px">···</div><div class="pg" style="left:635.5px;top:339.7px;width:8px;text-align:center;font-weight:700;color:#333;margin-left:-4px">15</div><svg class="abs" style="left:647.8px;top:342.5px" width="3" height="4.600" viewBox="0 0 6 9"><path d="M1 1l3.500 3.500L1 8" stroke="#555" stroke-width="1.300" fill="none"/></svg><div class="pg" style="left:662px;top:339.7px;color:#666">前往</div><div class="abs" style="left:675.6px;top:340.5px;width:13.4px;height:8.600px;border:0.8px solid #e6e7ea;border-radius:1.500px;background:#fff"></div><div class="pg" style="left:675.6px;top:339.7px;width:13.4px;text-align:center">1</div><div class="pg" style="left:691.5px;top:339.7px;color:#666">页</div>
<div class="sec" style="top:370.0px;height:238.0px"></div><div class="abs" style="left:328px;top:377.6px;width:1.5px;height:6.2px;background:#1862ff"></div><div class="t" style="left:331.9px;top:375.9px;font-size:7.4px;font-weight:500;color:#222">其他标识段</div><div class="hl" style="left:328px;top:389.5px;width:503.5px"></div><div class="lbl" style="left:303.5px;top:398.7px;width:70px">客户号:</div><div class="inp" style="left:376.3px;top:398.7px">请输入</div><div class="lbl" style="left:441.9px;top:398.7px;width:70px">企业名称:</div><div class="inp" style="left:515.4px;top:398.7px">请输入</div><div class="lbl" style="left:600.5px;top:398.7px;width:70px">企业身份标示码:</div><div class="inp" style="left:673.0px;top:398.7px">请输入</div><div class="btn" style="left:780px;top:399.6px;width:45px;background:#2d8cf0"><svg class="abs" style="left:9.800px;top:3.600px" width="7.4" height="7.4" viewBox="0 0 13 13"><circle cx="5.500" cy="5.500" r="4" fill="none" stroke="#fff" stroke-width="2.100"/><path d="M8.500 8.500l3.500 3.500" stroke="#fff" stroke-width="2.300"/></svg><div class="t" style="left:20.2px;top:2.4px">查询</div></div><div class="lbl" style="left:303.5px;top:421.0px;width:70px">信息报告日期:</div><div class="inp" style="left:376.3px;top:421.0px">请选择<svg class="abs" style="left:75px;top:2.1px" width="8.8" height="8.4" viewBox="0 0 18 17"><rect x="1.500" y="2.500" width="15" height="13" rx="1.500" fill="#f2f2f3" stroke="#c4c4c8" stroke-width="1.500"/><path d="M1.500 6.500h15" stroke="#c4c4c8" stroke-width="1.500"/><path d="M5.500 .5v3.500M12.500 .5v3.500" stroke="#c4c4c8" stroke-width="1.600"/><path d="M4.500 9.500h2M8 9.500h2M11.500 9.500h2M4.500 12.500h2M8 12.500h2" stroke="#d2d2d6" stroke-width="1.400"/></svg></div><div class="lbl" style="left:441.9px;top:421.0px;width:70px">数据日期:</div><div class="inp" style="left:515.4px;top:421.0px">请选择<svg class="abs" style="left:75px;top:2.1px" width="8.8" height="8.4" viewBox="0 0 18 17"><rect x="1.500" y="2.500" width="15" height="13" rx="1.500" fill="#f2f2f3" stroke="#c4c4c8" stroke-width="1.500"/><path d="M1.500 6.500h15" stroke="#c4c4c8" stroke-width="1.500"/><path d="M5.500 .5v3.500M12.500 .5v3.500" stroke="#c4c4c8" stroke-width="1.600"/><path d="M4.500 9.500h2M8 9.500h2M11.500 9.500h2M4.500 12.500h2M8 12.500h2" stroke="#d2d2d6" stroke-width="1.400"/></svg></div><div class="lbl" style="left:600.5px;top:421.0px;width:70px">校验状态:</div><div class="inp" style="left:673.0px;top:421.0px">请选择<svg class="abs" style="left:77.4px;top:5.2px" width="5.4" height="3.4" viewBox="0 0 11 7"><path d="M1 1l4.500 4.500L10 1" stroke="#b4b4b8" stroke-width="1.500" fill="none"/></svg></div><div class="hl" style="left:328px;top:445.0px;width:503.5px"></div><div class="t" style="left:334.6px;top:456.4px;font-size:6.1px;color:#666;font-weight:500">排序</div><div class="abs" style="left:352px;top:454.0px;width:20.4px;height:14px;background:#bdbdbd;border-radius:2.500px 0 0 2.500px"></div><div class="abs" style="left:372.4px;top:454.0px;width:21px;height:14px;background:#efefef;border-radius:0 2.500px 2.500px 0"></div><svg class="abs" style="left:357.6px;top:457.5px" width="9.6" height="7" viewBox="0 0 19 14"><path d="M4 13.500V3" stroke="#fff" stroke-width="2.600" fill="none"/><path d="M0 6l4-5.500L8 6z" fill="#fff"/><path d="M10.500 2.500h7M10.500 7h7M10.500 11.500h7" stroke="#fff" stroke-width="2"/></svg><svg class="abs" style="left:378.2px;top:457.5px" width="9.6" height="7" viewBox="0 0 19 14"><path d="M4 .5v12M.8 8.500l3.200 4L7.200 8.500" stroke="#a4a4a4" stroke-width="1.900" fill="none"/><path d="M10.500 2.500h7M10.500 7h7M10.500 11.500h7" stroke="#a4a4a4" stroke-width="1.800"/></svg><div class="btn" style="left:727.8px;top:454.0px;width:45px;height:14px;background:#fbab16"><svg class="abs" style="left:8.800px;top:3.300px" width="7" height="7.400" viewBox="0 0 13 14"><path d="M.8 3.800h11.400M4.300 3V1.200h4.400V3M2.400 4.500v6.500q0 1.800 1.800 1.800h4.600q1.800 0 1.800-1.800V4.500" stroke="#fff" stroke-width="2" fill="none"/><path d="M4.700 8.300h3.600" stroke="#fff" stroke-width="1.800"/></svg><div class="t" style="left:20.5px;top:2px;color:#fff3d0">删除</div></div><div class="btn" style="left:782px;top:454.0px;width:45.2px;height:14px;background:#3dc25a"><svg class="abs" style="left:9px;top:3.500px" width="7" height="7" viewBox="0 0 14 14"><path d="M7 .5v13M.5 7h13" stroke="#fff" stroke-width="2.400"/></svg><div class="t" style="left:20.5px;top:2px;color:#d8f5df">添加</div></div><div class="abs" style="left:332px;top:475.3px;width:495.5px;height:106px;background:#fff;border:0 solid #eef0f4"></div><div class="abs" style="left:332px;top:474.8px;width:495.5px;height:21.1px;background:#f7f7f9"></div><div class="abs" style="left:332px;top:516.2px;width:495.5px;height:20.8px;background:#e6f0fc"></div><div class="abs" style="left:332px;top:556.8px;width:495.5px;height:23px;background:#f5f8fc"></div><div class="hl" style="left:332px;top:580.8px;width:495.5px;background:#eef0f5"></div><div class="cb" style="left:339px;top:483.5px"></div><div class="th" style="left:351.0px;top:481.1px">序号</div><div class="th" style="left:374.8px;top:481.1px">操作</div><div class="th" style="left:440.5px;top:481.1px">客户号</div><div class="th" style="left:483.0px;top:481.1px">企业名称</div><div class="th" style="left:558.5px;top:481.1px">企业身份标示类型</div><div class="th" style="left:625.5px;top:481.1px">企业标示号码</div><div class="th" style="left:702.0px;top:481.1px">信息填报日期</div><div class="th" style="left:753.5px;top:481.1px">报告时点说明代码</div><div class="cb" style="left:339px;top:503.0px"></div><div class="td" style="left:351px;top:501.6px;font-weight:500">1</div><svg class="abs" style="left:375.6px;top:501.2px" width="8.8" height="9.400" viewBox="0 0 18 19"><path d="M2 .5h8.500l4 4V10H10v8H2Q.5 18 .5 16.500V2Q.5 .5 2 .5z" fill="#2b84f0"/><path d="M3.200 5.200h5.300M3.200 8.800h8M3.200 12.400h4.300" stroke="#fff" stroke-width="2"/><circle cx="13.200" cy="14" r="2.600" fill="#fff" stroke="#2b84f0" stroke-width="1.900"/><path d="M15 16l2.400 2.400" stroke="#2b84f0" stroke-width="2"/></svg><svg class="abs" style="left:389.400px;top:501.2px" width="9" height="9.400" viewBox="0 0 18 19"><path d="M.3 1.500h17.200" stroke="#2b84f0" stroke-width="1.800"/><path d="M.3 6.500h5.500M.3 11.500h4M.3 16.500h5.500" stroke="#5a9ff4" stroke-width="1.800"/><circle cx="12" cy="12.300" r="5.900" fill="#2b84f0"/><circle cx="12" cy="12.300" r="2" fill="#fff"/></svg><svg class="abs" style="left:404.100px;top:501.5px" width="9.4" height="9.400" viewBox="0 0 19 19"><circle cx="9.500" cy="9.500" r="8" fill="none" stroke="#2b84f0" stroke-width="2.200"/><path d="M5.300 9.600l3 3 5.400-5.800" stroke="#2b84f0" stroke-width="2.400" fill="none"/></svg><svg class="abs" style="left:418.400px;top:501.2px" width="9.400" height="9.400" viewBox="0 0 19 19"><path d="M17.700 7V3.200q0-2-2-2H3.300q-2 0-2 2v12.600q0 2 2 2H6.500" stroke="#2b84f0" stroke-width="2.500" fill="none"/><path d="M1.300 6.200h16.400" stroke="#2b84f0" stroke-width="2.400"/><path d="M8.700 11.200h6.300q2.800 0 2.800 3t-2.800 3H10.500" stroke="#2b84f0" stroke-width="2.400" fill="none"/><path d="M11.600 8.200L8.400 11.200l3.200 3" stroke="#2b84f0" stroke-width="2.300" fill="none"/></svg><div class="td" style="left:440.7px;top:501.6px"><span style="letter-spacing:-0.05px">783-0002</span></div><div class="td" style="left:483.4px;top:501.6px"><span style="letter-spacing:-0.3px">XXXX</span>股份有限公司</div><div class="td" style="left:558.5px;top:501.6px">工商注册号</div><div class="td" style="left:625.5px;top:501.6px"><span style="letter-spacing:-0.13px">23010000001332681</span></div><div class="td" style="left:702.0px;top:501.6px">2020-04-19</div><div class="td" style="left:753.5px;top:501.6px">新增客户资料/首次上报</div><div class="cbk" style="left:338.8px;top:523.1px"><svg class="abs" style="left:0.7px;top:0.9px" width="5" height="4.600" viewBox="0 0 10 9"><path d="M1.500 4.500l2.700 2.700L8.500 2" stroke="#fff" stroke-width="1.800" fill="none"/></svg></div><div class="td" style="left:351px;top:521.8px;font-weight:500">2</div><svg class="abs" style="left:375.6px;top:521.4px" width="8.8" height="9.400" viewBox="0 0 18 19"><path d="M2 .5h8.500l4 4V10H10v8H2Q.5 18 .5 16.500V2Q.5 .5 2 .5z" fill="#2b84f0"/><path d="M3.200 5.200h5.300M3.200 8.800h8M3.200 12.400h4.300" stroke="#fff" stroke-width="2"/><circle cx="13.200" cy="14" r="2.600" fill="#fff" stroke="#2b84f0" stroke-width="1.900"/><path d="M15 16l2.400 2.400" stroke="#2b84f0" stroke-width="2"/></svg><svg class="abs" style="left:389.400px;top:521.4px" width="9" height="9.400" viewBox="0 0 18 19"><path d="M.3 1.500h17.200" stroke="#2b84f0" stroke-width="1.800"/><path d="M.3 6.500h5.500M.3 11.500h4M.3 16.500h5.500" stroke="#5a9ff4" stroke-width="1.800"/><circle cx="12" cy="12.300" r="5.900" fill="#2b84f0"/><circle cx="12" cy="12.300" r="2" fill="#fff"/></svg><svg class="abs" style="left:404.100px;top:521.7px" width="9.4" height="9.400" viewBox="0 0 19 19"><circle cx="9.500" cy="9.500" r="8" fill="none" stroke="#2b84f0" stroke-width="2.200"/><path d="M5.300 9.600l3 3 5.400-5.800" stroke="#2b84f0" stroke-width="2.400" fill="none"/></svg><svg class="abs" style="left:418.400px;top:521.4px" width="9.400" height="9.400" viewBox="0 0 19 19"><path d="M17.700 7V3.200q0-2-2-2H3.300q-2 0-2 2v12.600q0 2 2 2H6.500" stroke="#2b84f0" stroke-width="2.500" fill="none"/><path d="M1.300 6.200h16.400" stroke="#2b84f0" stroke-width="2.400"/><path d="M8.700 11.200h6.300q2.800 0 2.800 3t-2.800 3H10.500" stroke="#2b84f0" stroke-width="2.400" fill="none"/><path d="M11.600 8.200L8.400 11.200l3.200 3" stroke="#2b84f0" stroke-width="2.300" fill="none"/></svg><div class="td" style="left:440.7px;top:521.8px"><span style="letter-spacing:-0.05px">783-0002</span></div><div class="td" style="left:483.4px;top:521.8px"><span style="letter-spacing:-0.3px">XXXX</span>股份有限公司</div><div class="td" style="left:558.5px;top:521.8px">工商注册号</div><div class="td" style="left:625.5px;top:521.8px"><span style="letter-spacing:-0.13px">23010000001332681</span></div><div class="td" style="left:702.0px;top:521.8px">2020-04-19</div><div class="td" style="left:753.5px;top:521.8px">新增客户资料/首次上报</div><div class="cbk" style="left:338.8px;top:543.3px"><svg class="abs" style="left:0.7px;top:0.9px" width="5" height="4.600" viewBox="0 0 10 9"><path d="M1.500 4.500l2.700 2.700L8.500 2" stroke="#fff" stroke-width="1.800" fill="none"/></svg></div><div class="td" style="left:351px;top:542.0px;font-weight:500">3</div><svg class="abs" style="left:375.6px;top:541.6px" width="8.8" height="9.400" viewBox="0 0 18 19"><path d="M2 .5h8.500l4 4V10H10v8H2Q.5 18 .5 16.500V2Q.5 .5 2 .5z" fill="#2b84f0"/><path d="M3.200 5.200h5.300M3.200 8.800h8M3.200 12.400h4.300" stroke="#fff" stroke-width="2"/><circle cx="13.200" cy="14" r="2.600" fill="#fff" stroke="#2b84f0" stroke-width="1.900"/><path d="M15 16l2.400 2.400" stroke="#2b84f0" stroke-width="2"/></svg><svg class="abs" style="left:389.400px;top:541.6px" width="9" height="9.400" viewBox="0 0 18 19"><path d="M.3 1.500h17.200" stroke="#2b84f0" stroke-width="1.800"/><path d="M.3 6.500h5.500M.3 11.500h4M.3 16.500h5.500" stroke="#5a9ff4" stroke-width="1.800"/><circle cx="12" cy="12.300" r="5.900" fill="#2b84f0"/><circle cx="12" cy="12.300" r="2" fill="#fff"/></svg><svg class="abs" style="left:404.100px;top:541.9px" width="9.4" height="9.400" viewBox="0 0 19 19"><circle cx="9.500" cy="9.500" r="8" fill="none" stroke="#2b84f0" stroke-width="2.200"/><path d="M5.300 9.600l3 3 5.400-5.800" stroke="#2b84f0" stroke-width="2.400" fill="none"/></svg><svg class="abs" style="left:418.400px;top:541.6px" width="9.400" height="9.400" viewBox="0 0 19 19"><path d="M17.700 7V3.200q0-2-2-2H3.300q-2 0-2 2v12.600q0 2 2 2H6.500" stroke="#2b84f0" stroke-width="2.500" fill="none"/><path d="M1.300 6.200h16.400" stroke="#2b84f0" stroke-width="2.400"/><path d="M8.700 11.200h6.300q2.800 0 2.800 3t-2.800 3H10.500" stroke="#2b84f0" stroke-width="2.400" fill="none"/><path d="M11.600 8.200L8.400 11.200l3.200 3" stroke="#2b84f0" stroke-width="2.300" fill="none"/></svg><div class="td" style="left:440.7px;top:542.0px"><span style="letter-spacing:-0.05px">783-0002</span></div><div class="td" style="left:483.4px;top:542.0px"><span style="letter-spacing:-0.3px">XXXX</span>股份有限公司</div><div class="td" style="left:558.5px;top:542.0px">工商注册号</div><div class="td" style="left:625.5px;top:542.0px"><span style="letter-spacing:-0.13px">23010000001332681</span></div><div class="td" style="left:702.0px;top:542.0px">2020-04-19</div><div class="td" style="left:753.5px;top:542.0px">新增客户资料/首次上报</div><div class="cbk" style="left:338.8px;top:563.1px"><svg class="abs" style="left:0.7px;top:0.9px" width="5" height="4.600" viewBox="0 0 10 9"><path d="M1.500 4.500l2.700 2.700L8.500 2" stroke="#fff" stroke-width="1.800" fill="none"/></svg></div><div class="td" style="left:351px;top:561.8px;font-weight:500">4</div><svg class="abs" style="left:375.6px;top:561.4px" width="8.8" height="9.400" viewBox="0 0 18 19"><path d="M2 .5h8.500l4 4V10H10v8H2Q.5 18 .5 16.500V2Q.5 .5 2 .5z" fill="#2b84f0"/><path d="M3.200 5.200h5.300M3.200 8.800h8M3.200 12.400h4.300" stroke="#fff" stroke-width="2"/><circle cx="13.200" cy="14" r="2.600" fill="#fff" stroke="#2b84f0" stroke-width="1.900"/><path d="M15 16l2.400 2.400" stroke="#2b84f0" stroke-width="2"/></svg><svg class="abs" style="left:389.400px;top:561.4px" width="9" height="9.400" viewBox="0 0 18 19"><path d="M.3 1.500h17.200" stroke="#2b84f0" stroke-width="1.800"/><path d="M.3 6.500h5.500M.3 11.500h4M.3 16.500h5.500" stroke="#5a9ff4" stroke-width="1.800"/><circle cx="12" cy="12.300" r="5.900" fill="#2b84f0"/><circle cx="12" cy="12.300" r="2" fill="#fff"/></svg><svg class="abs" style="left:404.100px;top:561.7px" width="9.4" height="9.400" viewBox="0 0 19 19"><circle cx="9.500" cy="9.500" r="8" fill="none" stroke="#2b84f0" stroke-width="2.200"/><path d="M5.300 9.600l3 3 5.400-5.800" stroke="#2b84f0" stroke-width="2.400" fill="none"/></svg><svg class="abs" style="left:418.400px;top:561.4px" width="9.400" height="9.400" viewBox="0 0 19 19"><path d="M17.700 7V3.200q0-2-2-2H3.300q-2 0-2 2v12.600q0 2 2 2H6.500" stroke="#2b84f0" stroke-width="2.500" fill="none"/><path d="M1.300 6.200h16.400" stroke="#2b84f0" stroke-width="2.400"/><path d="M8.700 11.200h6.300q2.800 0 2.800 3t-2.800 3H10.500" stroke="#2b84f0" stroke-width="2.400" fill="none"/><path d="M11.600 8.200L8.400 11.200l3.200 3" stroke="#2b84f0" stroke-width="2.300" fill="none"/></svg><div class="td" style="left:440.7px;top:561.8px"><span style="letter-spacing:-0.05px">783-0002</span></div><div class="td" style="left:483.4px;top:561.8px"><span style="letter-spacing:-0.3px">XXXX</span>股份有限公司</div><div class="td" style="left:558.5px;top:561.8px">工商注册号</div><div class="td" style="left:625.5px;top:561.8px"><span style="letter-spacing:-0.13px">23010000001332681</span></div><div class="td" style="left:702.0px;top:561.8px">2020-04-19</div><div class="td" style="left:753.5px;top:561.8px">新增客户资料/首次上报</div><div class="abs" style="left:824.1px;top:496.1px;width:3.6px;height:56px;background:#e9e9ec;border-radius:1px"></div><div class="abs" style="left:332px;top:577.5px;width:55.5px;height:3.4px;background:#dcdde1;border-radius:1px"></div><div class="pg" style="left:466.6px;top:589.9px">共 141 条</div><div class="abs" style="left:494px;top:590.7px;width:34.5px;height:8.600px;border:0.8px solid #e6e7ea;border-radius:1.500px;background:#fff"></div><div class="pg" style="left:498.2px;top:589.9px">10条/页</div><svg class="abs" style="left:521.5px;top:593.9px" width="3.6" height="2.400" viewBox="0 0 9 6"><path d="M1 1l3.500 3.500L8 1" stroke="#b8bcc4" stroke-width="1.300" fill="none"/></svg><svg class="abs" style="left:537.2px;top:592.7px" width="3" height="4.600" viewBox="0 0 6 9"><path d="M5 1L1.500 4.500 5 8" stroke="#c0c4cc" stroke-width="1.300" fill="none"/></svg><div class="pg" style="left:551.2px;top:589.9px;width:8px;text-align:center;font-weight:700;color:#2d8cf0;margin-left:-4px">1</div><div class="pg" style="left:563.6px;top:589.9px;width:8px;text-align:center;font-weight:700;color:#333;margin-left:-4px">2</div><div class="pg" style="left:575.8px;top:589.9px;width:8px;text-align:center;font-weight:700;color:#333;margin-left:-4px">3</div><div class="pg" style="left:588.0px;top:589.9px;width:8px;text-align:center;font-weight:700;color:#333;margin-left:-4px">4</div><div class="pg" style="left:600.2px;top:589.9px;width:8px;text-align:center;font-weight:700;color:#333;margin-left:-4px">5</div><div class="pg" style="left:612.4px;top:589.9px;width:8px;text-align:center;font-weight:700;color:#333;margin-left:-4px">6</div><div class="pg" style="left:622.5px;top:589.9px;width:8px;text-align:center;font-weight:700;color:#333;margin-left:-4px">···</div><div class="pg" style="left:635.5px;top:589.9px;width:8px;text-align:center;font-weight:700;color:#333;margin-left:-4px">15</div><svg class="abs" style="left:647.8px;top:592.7px" width="3" height="4.600" viewBox="0 0 6 9"><path d="M1 1l3.500 3.500L1 8" stroke="#555" stroke-width="1.300" fill="none"/></svg><div class="pg" style="left:662px;top:589.9px;color:#666">前往</div><div class="abs" style="left:675.6px;top:590.7px;width:13.4px;height:8.600px;border:0.8px solid #e6e7ea;border-radius:1.500px;background:#fff"></div><div class="pg" style="left:675.6px;top:589.9px;width:13.4px;text-align:center">1</div><div class="pg" style="left:691.5px;top:589.9px;color:#666">页</div>
<div class="sec" style="top:620.7px;height:237.8px"></div><div class="abs" style="left:328px;top:628.3px;width:1.5px;height:6.2px;background:#1862ff"></div><div class="t" style="left:331.9px;top:626.6px;font-size:7.4px;font-weight:500;color:#222">基本状况段</div><div class="hl" style="left:328px;top:640.0px;width:503.5px"></div><div class="lbl" style="left:303.5px;top:649.2px;width:70px">客户号:</div><div class="inp" style="left:376.3px;top:649.2px">请输入</div><div class="lbl" style="left:441.9px;top:649.2px;width:70px">企业名称:</div><div class="inp" style="left:515.4px;top:649.2px">请输入</div><div class="lbl" style="left:600.5px;top:649.2px;width:70px">企业身份标示码:</div><div class="inp" style="left:673.0px;top:649.2px">请输入</div><div class="btn" style="left:780px;top:650.1px;width:45px;background:#2d8cf0"><svg class="abs" style="left:9.800px;top:3.600px" width="7.4" height="7.4" viewBox="0 0 13 13"><circle cx="5.500" cy="5.500" r="4" fill="none" stroke="#fff" stroke-width="2.100"/><path d="M8.500 8.500l3.500 3.500" stroke="#fff" stroke-width="2.300"/></svg><div class="t" style="left:20.2px;top:2.4px">查询</div></div><div class="lbl" style="left:303.5px;top:671.5px;width:70px">信息报告日期:</div><div class="inp" style="left:376.3px;top:671.5px">请选择<svg class="abs" style="left:75px;top:2.1px" width="8.8" height="8.4" viewBox="0 0 18 17"><rect x="1.500" y="2.500" width="15" height="13" rx="1.500" fill="#f2f2f3" stroke="#c4c4c8" stroke-width="1.500"/><path d="M1.500 6.500h15" stroke="#c4c4c8" stroke-width="1.500"/><path d="M5.500 .5v3.500M12.500 .5v3.500" stroke="#c4c4c8" stroke-width="1.600"/><path d="M4.500 9.500h2M8 9.500h2M11.500 9.500h2M4.500 12.500h2M8 12.500h2" stroke="#d2d2d6" stroke-width="1.400"/></svg></div><div class="lbl" style="left:441.9px;top:671.5px;width:70px">数据日期:</div><div class="inp" style="left:515.4px;top:671.5px">请选择<svg class="abs" style="left:75px;top:2.1px" width="8.8" height="8.4" viewBox="0 0 18 17"><rect x="1.500" y="2.500" width="15" height="13" rx="1.500" fill="#f2f2f3" stroke="#c4c4c8" stroke-width="1.500"/><path d="M1.500 6.500h15" stroke="#c4c4c8" stroke-width="1.500"/><path d="M5.500 .5v3.500M12.500 .5v3.500" stroke="#c4c4c8" stroke-width="1.600"/><path d="M4.500 9.500h2M8 9.500h2M11.500 9.500h2M4.500 12.500h2M8 12.500h2" stroke="#d2d2d6" stroke-width="1.400"/></svg></div><div class="lbl" style="left:600.5px;top:671.5px;width:70px">校验状态:</div><div class="inp" style="left:673.0px;top:671.5px">请选择<svg class="abs" style="left:77.4px;top:5.2px" width="5.4" height="3.4" viewBox="0 0 11 7"><path d="M1 1l4.500 4.500L10 1" stroke="#b4b4b8" stroke-width="1.500" fill="none"/></svg></div><div class="hl" style="left:328px;top:694.9px;width:503.5px"></div><div class="t" style="left:334.6px;top:706.3px;font-size:6.1px;color:#666;font-weight:500">排序</div><div class="abs" style="left:352px;top:703.9px;width:20.4px;height:14px;background:#bdbdbd;border-radius:2.500px 0 0 2.500px"></div><div class="abs" style="left:372.4px;top:703.9px;width:21px;height:14px;background:#efefef;border-radius:0 2.500px 2.500px 0"></div><svg class="abs" style="left:357.6px;top:707.4px" width="9.6" height="7" viewBox="0 0 19 14"><path d="M4 13.500V3" stroke="#fff" stroke-width="2.600" fill="none"/><path d="M0 6l4-5.500L8 6z" fill="#fff"/><path d="M10.500 2.500h7M10.500 7h7M10.500 11.500h7" stroke="#fff" stroke-width="2"/></svg><svg class="abs" style="left:378.2px;top:707.4px" width="9.6" height="7" viewBox="0 0 19 14"><path d="M4 .5v12M.8 8.500l3.200 4L7.200 8.500" stroke="#a4a4a4" stroke-width="1.900" fill="none"/><path d="M10.500 2.500h7M10.500 7h7M10.500 11.500h7" stroke="#a4a4a4" stroke-width="1.800"/></svg><div class="btn" style="left:727.8px;top:703.9px;width:45px;height:14px;background:#fbab16"><svg class="abs" style="left:8.800px;top:3.300px" width="7" height="7.400" viewBox="0 0 13 14"><path d="M.8 3.800h11.400M4.300 3V1.200h4.400V3M2.400 4.500v6.500q0 1.800 1.800 1.800h4.600q1.800 0 1.800-1.800V4.500" stroke="#fff" stroke-width="2" fill="none"/><path d="M4.700 8.300h3.600" stroke="#fff" stroke-width="1.800"/></svg><div class="t" style="left:20.5px;top:2px;color:#fff3d0">删除</div></div><div class="btn" style="left:782px;top:703.9px;width:45.2px;height:14px;background:#3dc25a"><svg class="abs" style="left:9px;top:3.500px" width="7" height="7" viewBox="0 0 14 14"><path d="M7 .5v13M.5 7h13" stroke="#fff" stroke-width="2.400"/></svg><div class="t" style="left:20.5px;top:2px;color:#d8f5df">添加</div></div><div class="abs" style="left:332px;top:725.2px;width:495.5px;height:106px;background:#fff;border:0 solid #eef0f4"></div><div class="abs" style="left:332px;top:724.7px;width:495.5px;height:21.1px;background:#f7f7f9"></div><div class="abs" style="left:332px;top:766.1px;width:495.5px;height:20.8px;background:#e6f0fc"></div><div class="abs" style="left:332px;top:806.7px;width:495.5px;height:23px;background:#f5f8fc"></div><div class="hl" style="left:332px;top:830.7px;width:495.5px;background:#eef0f5"></div><div class="cb" style="left:339px;top:733.4px"></div><div class="th" style="left:351.0px;top:731.0px">序号</div><div class="th" style="left:374.8px;top:731.0px">操作</div><div class="th" style="left:440.5px;top:731.0px">客户号</div><div class="th" style="left:483.0px;top:731.0px">企业名称</div><div class="th" style="left:558.5px;top:731.0px">企业身份标示类型</div><div class="th" style="left:625.5px;top:731.0px">企业标示号码</div><div class="th" style="left:702.0px;top:731.0px">信息填报日期</div><div class="th" style="left:753.5px;top:731.0px">报告时点说明代码</div><div class="cb" style="left:339px;top:752.9px"></div><div class="td" style="left:351px;top:751.5px;font-weight:500">1</div><svg class="abs" style="left:375.6px;top:751.1px" width="8.8" height="9.400" viewBox="0 0 18 19"><path d="M2 .5h8.500l4 4V10H10v8H2Q.5 18 .5 16.500V2Q.5 .5 2 .5z" fill="#2b84f0"/><path d="M3.200 5.200h5.300M3.200 8.800h8M3.200 12.400h4.300" stroke="#fff" stroke-width="2"/><circle cx="13.200" cy="14" r="2.600" fill="#fff" stroke="#2b84f0" stroke-width="1.900"/><path d="M15 16l2.400 2.400" stroke="#2b84f0" stroke-width="2"/></svg><svg class="abs" style="left:389.400px;top:751.1px" width="9" height="9.400" viewBox="0 0 18 19"><path d="M.3 1.500h17.200" stroke="#2b84f0" stroke-width="1.800"/><path d="M.3 6.500h5.500M.3 11.500h4M.3 16.500h5.500" stroke="#5a9ff4" stroke-width="1.800"/><circle cx="12" cy="12.300" r="5.900" fill="#2b84f0"/><circle cx="12" cy="12.300" r="2" fill="#fff"/></svg><svg class="abs" style="left:404.100px;top:751.4px" width="9.4" height="9.400" viewBox="0 0 19 19"><circle cx="9.500" cy="9.500" r="8" fill="none" stroke="#2b84f0" stroke-width="2.200"/><path d="M5.300 9.600l3 3 5.400-5.800" stroke="#2b84f0" stroke-width="2.400" fill="none"/></svg><svg class="abs" style="left:418.400px;top:751.1px" width="9.400" height="9.400" viewBox="0 0 19 19"><path d="M17.700 7V3.200q0-2-2-2H3.300q-2 0-2 2v12.600q0 2 2 2H6.500" stroke="#2b84f0" stroke-width="2.500" fill="none"/><path d="M1.300 6.200h16.400" stroke="#2b84f0" stroke-width="2.400"/><path d="M8.700 11.200h6.300q2.800 0 2.800 3t-2.800 3H10.500" stroke="#2b84f0" stroke-width="2.400" fill="none"/><path d="M11.600 8.200L8.400 11.200l3.200 3" stroke="#2b84f0" stroke-width="2.300" fill="none"/></svg><div class="td" style="left:440.7px;top:751.5px"><span style="letter-spacing:-0.05px">783-0002</span></div><div class="td" style="left:483.4px;top:751.5px"><span style="letter-spacing:-0.3px">XXXX</span>股份有限公司</div><div class="td" style="left:558.5px;top:751.5px">工商注册号</div><div class="td" style="left:625.5px;top:751.5px"><span style="letter-spacing:-0.13px">23010000001332681</span></div><div class="td" style="left:702.0px;top:751.5px">2020-04-19</div><div class="td" style="left:753.5px;top:751.5px">新增客户资料/首次上报</div><div class="cbk" style="left:338.8px;top:773.0px"><svg class="abs" style="left:0.7px;top:0.9px" width="5" height="4.600" viewBox="0 0 10 9"><path d="M1.500 4.500l2.700 2.700L8.500 2" stroke="#fff" stroke-width="1.800" fill="none"/></svg></div><div class="td" style="left:351px;top:771.7px;font-weight:500">2</div><svg class="abs" style="left:375.6px;top:771.3px" width="8.8" height="9.400" viewBox="0 0 18 19"><path d="M2 .5h8.500l4 4V10H10v8H2Q.5 18 .5 16.500V2Q.5 .5 2 .5z" fill="#2b84f0"/><path d="M3.200 5.200h5.300M3.200 8.800h8M3.200 12.400h4.300" stroke="#fff" stroke-width="2"/><circle cx="13.200" cy="14" r="2.600" fill="#fff" stroke="#2b84f0" stroke-width="1.900"/><path d="M15 16l2.400 2.400" stroke="#2b84f0" stroke-width="2"/></svg><svg class="abs" style="left:389.400px;top:771.3px" width="9" height="9.400" viewBox="0 0 18 19"><path d="M.3 1.500h17.200" stroke="#2b84f0" stroke-width="1.800"/><path d="M.3 6.500h5.500M.3 11.500h4M.3 16.500h5.500" stroke="#5a9ff4" stroke-width="1.800"/><circle cx="12" cy="12.300" r="5.900" fill="#2b84f0"/><circle cx="12" cy="12.300" r="2" fill="#fff"/></svg><svg class="abs" style="left:404.100px;top:771.6px" width="9.4" height="9.400" viewBox="0 0 19 19"><circle cx="9.500" cy="9.500" r="8" fill="none" stroke="#2b84f0" stroke-width="2.200"/><path d="M5.300 9.600l3 3 5.400-5.800" stroke="#2b84f0" stroke-width="2.400" fill="none"/></svg><svg class="abs" style="left:418.400px;top:771.3px" width="9.400" height="9.400" viewBox="0 0 19 19"><path d="M17.700 7V3.200q0-2-2-2H3.300q-2 0-2 2v12.600q0 2 2 2H6.500" stroke="#2b84f0" stroke-width="2.500" fill="none"/><path d="M1.300 6.200h16.400" stroke="#2b84f0" stroke-width="2.400"/><path d="M8.700 11.200h6.300q2.800 0 2.800 3t-2.800 3H10.500" stroke="#2b84f0" stroke-width="2.400" fill="none"/><path d="M11.600 8.200L8.400 11.200l3.200 3" stroke="#2b84f0" stroke-width="2.300" fill="none"/></svg><div class="td" style="left:440.7px;top:771.7px"><span style="letter-spacing:-0.05px">783-0002</span></div><div class="td" style="left:483.4px;top:771.7px"><span style="letter-spacing:-0.3px">XXXX</span>股份有限公司</div><div class="td" style="left:558.5px;top:771.7px">工商注册号</div><div class="td" style="left:625.5px;top:771.7px"><span style="letter-spacing:-0.13px">23010000001332681</span></div><div class="td" style="left:702.0px;top:771.7px">2020-04-19</div><div class="td" style="left:753.5px;top:771.7px">新增客户资料/首次上报</div><div class="cbk" style="left:338.8px;top:793.2px"><svg class="abs" style="left:0.7px;top:0.9px" width="5" height="4.600" viewBox="0 0 10 9"><path d="M1.500 4.500l2.700 2.700L8.500 2" stroke="#fff" stroke-width="1.800" fill="none"/></svg></div><div class="td" style="left:351px;top:791.9px;font-weight:500">3</div><svg class="abs" style="left:375.6px;top:791.5px" width="8.8" height="9.400" viewBox="0 0 18 19"><path d="M2 .5h8.500l4 4V10H10v8H2Q.5 18 .5 16.500V2Q.5 .5 2 .5z" fill="#2b84f0"/><path d="M3.200 5.200h5.300M3.200 8.800h8M3.200 12.400h4.300" stroke="#fff" stroke-width="2"/><circle cx="13.200" cy="14" r="2.600" fill="#fff" stroke="#2b84f0" stroke-width="1.900"/><path d="M15 16l2.400 2.400" stroke="#2b84f0" stroke-width="2"/></svg><svg class="abs" style="left:389.400px;top:791.5px" width="9" height="9.400" viewBox="0 0 18 19"><path d="M.3 1.500h17.200" stroke="#2b84f0" stroke-width="1.800"/><path d="M.3 6.500h5.500M.3 11.500h4M.3 16.500h5.500" stroke="#5a9ff4" stroke-width="1.800"/><circle cx="12" cy="12.300" r="5.900" fill="#2b84f0"/><circle cx="12" cy="12.300" r="2" fill="#fff"/></svg><svg class="abs" style="left:404.100px;top:791.8px" width="9.4" height="9.400" viewBox="0 0 19 19"><circle cx="9.500" cy="9.500" r="8" fill="none" stroke="#2b84f0" stroke-width="2.200"/><path d="M5.300 9.600l3 3 5.400-5.800" stroke="#2b84f0" stroke-width="2.400" fill="none"/></svg><svg class="abs" style="left:418.400px;top:791.5px" width="9.400" height="9.400" viewBox="0 0 19 19"><path d="M17.700 7V3.200q0-2-2-2H3.300q-2 0-2 2v12.600q0 2 2 2H6.500" stroke="#2b84f0" stroke-width="2.500" fill="none"/><path d="M1.300 6.200h16.400" stroke="#2b84f0" stroke-width="2.400"/><path d="M8.700 11.200h6.300q2.800 0 2.800 3t-2.800 3H10.500" stroke="#2b84f0" stroke-width="2.400" fill="none"/><path d="M11.600 8.200L8.400 11.200l3.200 3" stroke="#2b84f0" stroke-width="2.300" fill="none"/></svg><div class="td" style="left:440.7px;top:791.9px"><span style="letter-spacing:-0.05px">783-0002</span></div><div class="td" style="left:483.4px;top:791.9px"><span style="letter-spacing:-0.3px">XXXX</span>股份有限公司</div><div class="td" style="left:558.5px;top:791.9px">工商注册号</div><div class="td" style="left:625.5px;top:791.9px"><span style="letter-spacing:-0.13px">23010000001332681</span></div><div class="td" style="left:702.0px;top:791.9px">2020-04-19</div><div class="td" style="left:753.5px;top:791.9px">新增客户资料/首次上报</div><div class="cbk" style="left:338.8px;top:813.0px"><svg class="abs" style="left:0.7px;top:0.9px" width="5" height="4.600" viewBox="0 0 10 9"><path d="M1.500 4.500l2.700 2.700L8.500 2" stroke="#fff" stroke-width="1.800" fill="none"/></svg></div><div class="td" style="left:351px;top:811.7px;font-weight:500">4</div><svg class="abs" style="left:375.6px;top:811.3px" width="8.8" height="9.400" viewBox="0 0 18 19"><path d="M2 .5h8.500l4 4V10H10v8H2Q.5 18 .5 16.500V2Q.5 .5 2 .5z" fill="#2b84f0"/><path d="M3.200 5.200h5.300M3.200 8.800h8M3.200 12.400h4.300" stroke="#fff" stroke-width="2"/><circle cx="13.200" cy="14" r="2.600" fill="#fff" stroke="#2b84f0" stroke-width="1.900"/><path d="M15 16l2.400 2.400" stroke="#2b84f0" stroke-width="2"/></svg><svg class="abs" style="left:389.400px;top:811.3px" width="9" height="9.400" viewBox="0 0 18 19"><path d="M.3 1.500h17.200" stroke="#2b84f0" stroke-width="1.800"/><path d="M.3 6.500h5.500M.3 11.500h4M.3 16.500h5.500" stroke="#5a9ff4" stroke-width="1.800"/><circle cx="12" cy="12.300" r="5.900" fill="#2b84f0"/><circle cx="12" cy="12.300" r="2" fill="#fff"/></svg><svg class="abs" style="left:404.100px;top:811.6px" width="9.4" height="9.400" viewBox="0 0 19 19"><circle cx="9.500" cy="9.500" r="8" fill="none" stroke="#2b84f0" stroke-width="2.200"/><path d="M5.300 9.600l3 3 5.400-5.800" stroke="#2b84f0" stroke-width="2.400" fill="none"/></svg><svg class="abs" style="left:418.400px;top:811.3px" width="9.400" height="9.400" viewBox="0 0 19 19"><path d="M17.700 7V3.200q0-2-2-2H3.300q-2 0-2 2v12.600q0 2 2 2H6.500" stroke="#2b84f0" stroke-width="2.500" fill="none"/><path d="M1.300 6.200h16.400" stroke="#2b84f0" stroke-width="2.400"/><path d="M8.700 11.200h6.300q2.800 0 2.800 3t-2.800 3H10.500" stroke="#2b84f0" stroke-width="2.400" fill="none"/><path d="M11.600 8.200L8.400 11.200l3.200 3" stroke="#2b84f0" stroke-width="2.300" fill="none"/></svg><div class="td" style="left:440.7px;top:811.7px"><span style="letter-spacing:-0.05px">783-0002</span></div><div class="td" style="left:483.4px;top:811.7px"><span style="letter-spacing:-0.3px">XXXX</span>股份有限公司</div><div class="td" style="left:558.5px;top:811.7px">工商注册号</div><div class="td" style="left:625.5px;top:811.7px"><span style="letter-spacing:-0.13px">23010000001332681</span></div><div class="td" style="left:702.0px;top:811.7px">2020-04-19</div><div class="td" style="left:753.5px;top:811.7px">新增客户资料/首次上报</div><div class="abs" style="left:824.1px;top:746.0px;width:3.6px;height:56px;background:#e9e9ec;border-radius:1px"></div><div class="abs" style="left:332px;top:827.4px;width:55.5px;height:3.4px;background:#dcdde1;border-radius:1px"></div><div class="pg" style="left:466.6px;top:839.8px">共 141 条</div><div class="abs" style="left:494px;top:840.6px;width:34.5px;height:8.600px;border:0.8px solid #e6e7ea;border-radius:1.500px;background:#fff"></div><div class="pg" style="left:498.2px;top:839.8px">10条/页</div><svg class="abs" style="left:521.5px;top:843.8px" width="3.6" height="2.400" viewBox="0 0 9 6"><path d="M1 1l3.500 3.500L8 1" stroke="#b8bcc4" stroke-width="1.300" fill="none"/></svg><svg class="abs" style="left:537.2px;top:842.6px" width="3" height="4.600" viewBox="0 0 6 9"><path d="M5 1L1.500 4.500 5 8" stroke="#c0c4cc" stroke-width="1.300" fill="none"/></svg><div class="pg" style="left:551.2px;top:839.8px;width:8px;text-align:center;font-weight:700;color:#2d8cf0;margin-left:-4px">1</div><div class="pg" style="left:563.6px;top:839.8px;width:8px;text-align:center;font-weight:700;color:#333;margin-left:-4px">2</div><div class="pg" style="left:575.8px;top:839.8px;width:8px;text-align:center;font-weight:700;color:#333;margin-left:-4px">3</div><div class="pg" style="left:588.0px;top:839.8px;width:8px;text-align:center;font-weight:700;color:#333;margin-left:-4px">4</div><div class="pg" style="left:600.2px;top:839.8px;width:8px;text-align:center;font-weight:700;color:#333;margin-left:-4px">5</div><div class="pg" style="left:612.4px;top:839.8px;width:8px;text-align:center;font-weight:700;color:#333;margin-left:-4px">6</div><div class="pg" style="left:622.5px;top:839.8px;width:8px;text-align:center;font-weight:700;color:#333;margin-left:-4px">···</div><div class="pg" style="left:635.5px;top:839.8px;width:8px;text-align:center;font-weight:700;color:#333;margin-left:-4px">15</div><svg class="abs" style="left:647.8px;top:842.6px" width="3" height="4.600" viewBox="0 0 6 9"><path d="M1 1l3.500 3.500L1 8" stroke="#555" stroke-width="1.300" fill="none"/></svg><div class="pg" style="left:662px;top:839.8px;color:#666">前往</div><div class="abs" style="left:675.6px;top:840.6px;width:13.4px;height:8.600px;border:0.8px solid #e6e7ea;border-radius:1.500px;background:#fff"></div><div class="pg" style="left:675.6px;top:839.8px;width:13.4px;text-align:center">1</div><div class="pg" style="left:691.5px;top:839.8px;color:#666">页</div>
<div class="abs" style="left:0;top:905.4px;width:870px;height:1.6px;background:#ececef"></div><div class="abs" style="left:0;top:0;width:111px;height:1px;background:#fbf4de"></div><div class="abs" style="left:0;top:0;width:1px;height:905.4px;background:#fbf7ea"></div><div class="abs" style="left:111px;top:0;width:759px;height:1px;background:#f6f6f6"></div></div></body></html>
